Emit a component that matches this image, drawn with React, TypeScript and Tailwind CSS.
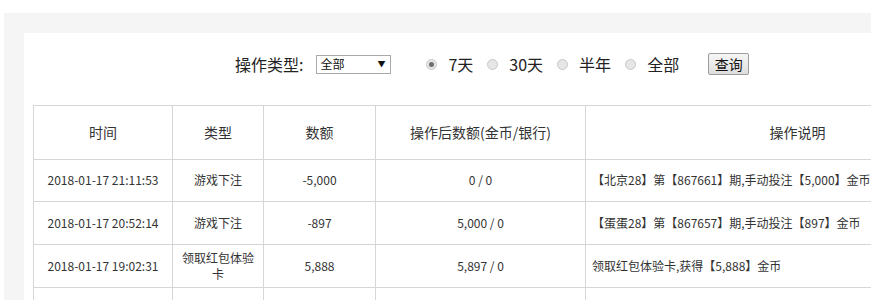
import React from "react";

const rows = [
  { time: "2018-01-17 21:11:53", type: "游戏下注", amount: "-5,000", after: "0 / 0", desc: "【北京28】第【867661】期,手动投注【5,000】金币" },
  { time: "2018-01-17 20:52:14", type: "游戏下注", amount: "-897", after: "5,000 / 0", desc: "【蛋蛋28】第【867657】期,手动投注【897】金币" },
  { time: "2018-01-17 19:02:31", type: "领取红包体验卡", amount: "5,888", after: "5,897 / 0", desc: "领取红包体验卡,获得【5,888】金币" },
  { time: "", type: "", amount: "", after: "", desc: "" },
];

function Radio({ checked, label }: { checked?: boolean; label: string }) {
  return (
    <label className="flex items-center">
      <span className="w-[11px] h-[11px] rounded-full border border-[#c8c8c8] bg-[#e6e6e6] flex items-center justify-center">
        {checked && <span className="w-[5px] h-[5px] rounded-full bg-[#6e6e6e]"></span>}
      </span>
      <span className="ml-[11px] text-[16px] text-[#222]">{label}</span>
    </label>
  );
}

export default function App() {
  return (
    <div className="w-[1100px] bg-white pt-[13px] pl-[4px] font-['Noto_Sans_CJK_SC',sans-serif] text-[#333]">
      <div className="bg-[#f5f5f5] pt-[20px] pl-[20px]">
        <div className="bg-white pl-[9px] pt-[20px]">
          {/* 筛选 */}
          <div className="flex items-center h-[22px] pl-[202px]">
            <span className="text-[16px] text-[#222]">操作类型:</span>
            <div className="ml-[13px] w-[75px] h-[19px] border border-[#a9a9a9] flex items-center justify-between px-[3px] text-[12px] text-[#111]">
              <span>全部</span>
              <span className="text-[8px] mr-[2px]">▼</span>
            </div>
            <div className="flex items-center gap-[14px] ml-[35px]">
              <Radio checked label="7天" />
              <Radio label="30天" />
              <Radio label="半年" />
              <Radio label="全部" />
            </div>
            <button className="ml-[29px] w-[41px] h-[22px] border border-[#9c9c9c] rounded-[2px] bg-gradient-to-b from-[#f6f6f6] to-[#dedede] text-[14px] text-[#111] leading-none">
              查询
            </button>
          </div>

          {/* 表格 */}
          <table className="mt-[30px] border-collapse text-[12px] text-[#333]">
            <thead>
              <tr className="h-[53.5px] text-[14px]">
                <th className="w-[139px] border border-[#d6d6d6] font-normal">时间</th>
                <th className="w-[91px] border border-[#d6d6d6] font-normal">类型</th>
                <th className="w-[112px] border border-[#d6d6d6] font-normal">数额</th>
                <th className="w-[210px] border border-[#d6d6d6] font-normal">操作后数额(金币/银行)</th>
                <th className="w-[424px] border border-[#d6d6d6] font-normal">操作说明</th>
              </tr>
            </thead>
            <tbody>
              {rows.map((r, i) => (
                <tr key={i} className="h-[42.7px]">
                  <td className="border border-[#d6d6d6] text-center">{r.time}</td>
                  <td className="border border-[#d6d6d6] text-center px-[8px] leading-[16px]">{r.type}</td>
                  <td className="border border-[#d6d6d6] text-center">{r.amount}</td>
                  <td className="border border-[#d6d6d6] text-center">{r.after}</td>
                  <td className="border border-[#d6d6d6] pl-[6px] whitespace-nowrap">{r.desc}</td>
                </tr>
              ))}
            </tbody>
          </table>
        </div>
      </div>
    </div>
  );
}
